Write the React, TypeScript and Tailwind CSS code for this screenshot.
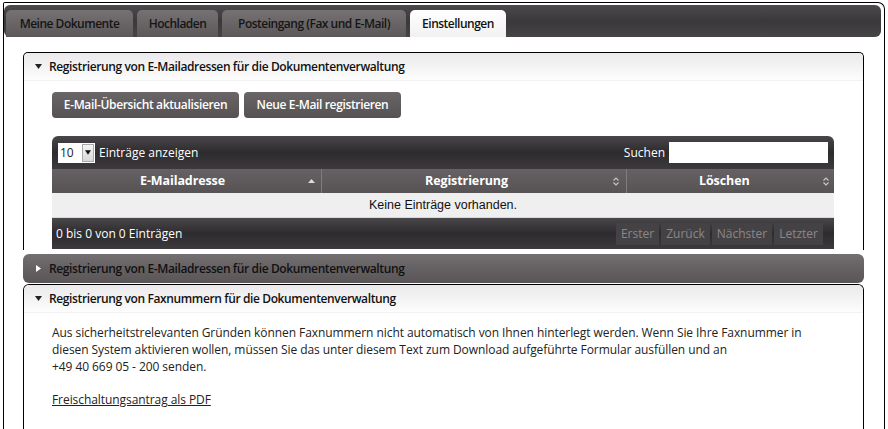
import React from 'react';

// Font stack: Segoe-like look, closest installed widths
const FONT = "font-['Open_Sans',_'Noto_Sans',_sans-serif]";

const TABS = ['Meine Dokumente', 'Hochladen', 'Posteingang (Fax und E-Mail)', 'Einstellungen'];
const TAB_WIDTHS = ['w-[127px]', 'w-[81px]', 'w-[184px]', 'w-[96px]'];

const TriangleDown: React.FC<{ className?: string }> = ({ className }) => (
  <svg width="7" height="5" viewBox="0 0 7 5" className={className}>
    <path d="M0 0h7L3.5 5z" fill="currentColor" />
  </svg>
);

const TriangleRight: React.FC<{ className?: string }> = ({ className }) => (
  <svg width="5" height="7" viewBox="0 0 5 7" className={className}>
    <path d="M0 0v7l5-3.5z" fill="currentColor" />
  </svg>
);

const SortBoth = () => (
  <svg width="6" height="9" viewBox="0 0 6 9" className="text-[#c9c6c8]">
    <path d="M0.5 3.5L3 1l2.5 2.5M0.5 5.5L3 8l2.5-2.5" stroke="currentColor" fill="none" strokeWidth="1.1" />
  </svg>
);

const SortUp = () => (
  <svg width="7" height="4" viewBox="0 0 7 4" className="text-[#dcdadb]">
    <path d="M0 4L3.5 0 7 4z" fill="currentColor" />
  </svg>
);

const PanelHeader: React.FC<{ title: string }> = ({ title }) => (
  <div className="h-[28px] flex items-center pl-[11px] gap-[7px] bg-gradient-to-b from-[#ebe9eb] to-[#fdfdfd] rounded-t-[5px] border-b border-[#f2f2f2]">
    <TriangleDown className="text-[#222]" />
    <span className="text-[12px] font-semibold tracking-[-0.38px] text-[#111]">{title}</span>
  </div>
);

export default function App() {
  return (
    <div className={`w-[888px] h-[429px] overflow-hidden bg-white pt-[2px] pl-[3px] ${FONT}`}>
      <div className="w-[882px] h-[440px] border border-black border-b-0 rounded-tr-[7px] rounded-tl-[2px] pt-[2px]">
        {/* Tab bar */}
        <div className="w-[877px] h-[32px] rounded-[6px] bg-gradient-to-b from-[#4d4a4d] via-[#3b383b] to-[#474447] flex items-end gap-[4px] pl-[2px]">
          {TABS.map((t, i) => {
            const active = i === 3;
            return (
              <div
                key={t}
                className={`${TAB_WIDTHS[i]} h-[27px] rounded-t-[5px] flex items-center justify-center text-[12px] font-semibold tracking-[-0.5px] ${
                  active
                    ? 'bg-gradient-to-b from-[#ffffff] to-[#f1f1f1] text-[#111]'
                    : 'bg-gradient-to-b from-[#767274] to-[#5c585a] text-[#151515]'
                }`}
              >
                {t}
              </div>
            );
          })}
        </div>

        {/* Panel 1: expanded e-mail registration */}
        <div className="ml-[19px] mt-[15px] w-[841px] h-[198px] overflow-hidden border border-black border-b-0 rounded-t-[5px]">
          <PanelHeader title="Registrierung von E-Mailadressen für die Dokumentenverwaltung" />
          <div className="pl-[28px] pt-[11px]">
            <div className="flex gap-[5px]">
              <button className="w-[187px] h-[26px] rounded-[4px] bg-gradient-to-b from-[#6a6668] to-[#565254] text-white text-[12px] font-semibold tracking-[-0.35px]">
                E-Mail-Übersicht aktualisieren
              </button>
              <button className="w-[157px] h-[26px] rounded-[4px] bg-gradient-to-b from-[#6a6668] to-[#565254] text-white text-[12px] font-semibold tracking-[-0.35px]">
                Neue E-Mail registrieren
              </button>
            </div>

            {/* Data table */}
            <div className="mt-[18px] w-[782px] rounded-t-[6px] overflow-hidden">
              <div className="h-[33px] flex items-center justify-between px-[6px] bg-gradient-to-b from-[#4a474a] via-[#2e2b2e] to-[#3d3a3d]">
                <div className="flex items-center gap-[4px]">
                  <div className="flex items-center h-[20px] w-[37px] bg-white">
                    <span className="text-[12px] text-[#222] pl-[2px] w-[24px]">10</span>
                    <div className="w-[12px] h-[18px] bg-gradient-to-b from-[#f4f4f4] to-[#d8d8d8] border border-[#aaa] flex items-center justify-center">
                      <TriangleDown className="text-[#111] w-[6px]" />
                    </div>
                  </div>
                  <span className="text-[12px] text-white">Einträge anzeigen</span>
                </div>
                <div className="flex items-center gap-[4px]">
                  <span className="text-[12px] text-white">Suchen</span>
                  <div className="w-[159px] h-[21px] bg-white" />
                </div>
              </div>
              <div className="h-[24px] flex bg-gradient-to-b from-[#666264] to-[#575355] text-white text-[12.5px] font-bold tracking-[-0.1px]">
                <div className="w-[270px] flex items-center pl-[88px] pr-[6px] justify-between border-r border-[#807c7e]">
                  <span>E-Mailadresse</span>
                  <SortUp />
                </div>
                <div className="w-[305px] flex items-center pl-[103px] pr-[7px] justify-between border-r border-[#807c7e]">
                  <span>Registrierung</span>
                  <SortBoth />
                </div>
                <div className="flex-1 flex items-center pl-[72px] pr-[5px] justify-between">
                  <span>Löschen</span>
                  <SortBoth />
                </div>
              </div>
              <div className="h-[25px] flex items-center justify-center bg-[#efefef] border-b border-[#d8d8d8] text-[12.5px] text-[#111] font-['Liberation_Sans',_Arial,_sans-serif]">
                Keine Einträge vorhanden.
              </div>
              <div className="h-[31px] flex items-center justify-between pl-[4px] pr-[11px] bg-gradient-to-b from-[#4a474a] via-[#2e2b2e] to-[#3d3a3d]">
                <span className="text-[12px] text-white">0 bis 0 von 0 Einträgen</span>
                <div className="flex gap-[2px] text-[12px] text-[#8a8789]">
                  <span className="px-[5px] h-[22px] flex items-center bg-[#454245]">Erster</span>
                  <span className="px-[5px] h-[22px] flex items-center bg-[#454245]">Zurück</span>
                  <span className="px-[5px] h-[22px] flex items-center bg-[#454245]">Nächster</span>
                  <span className="px-[5px] h-[22px] flex items-center bg-[#454245]">Letzter</span>
                </div>
              </div>
            </div>
          </div>
        </div>

        {/* Panel 2: collapsed header */}
        <div className="ml-[19px] mt-[4px] w-[841px] h-[29px] rounded-[6px] bg-gradient-to-b from-[#747072] via-[#656163] to-[#5a5658] flex items-center pl-[13px] gap-[8px]">
          <TriangleRight className="text-white" />
          <span className="text-[12px] font-semibold tracking-[-0.38px] text-[#111]">
            Registrierung von E-Mailadressen für die Dokumentenverwaltung
          </span>
        </div>

        {/* Panel 3: fax numbers */}
        <div className="ml-[19px] mt-[1px] w-[841px] h-[200px] border border-black border-b-0 rounded-t-[6px]">
          <PanelHeader title="Registrierung von Faxnummern für die Dokumentenverwaltung" />
          <div className="pl-[28px] pt-[11px] text-[12px] leading-[17px] tracking-[-0.07px] text-[#222]">
            <p>
              Aus sicherheitstrelevanten Gründen können Faxnummern nicht automatisch von Ihnen hinterlegt werden. Wenn Sie Ihre Faxnummer in
              <br />
              diesen System aktivieren wollen, müssen Sie das unter diesem Text zum Download aufgeführte Formular ausfüllen und an
              <br />
              +49 40 669 05 - 200 senden.
            </p>
            <a href="#" className="block mt-[16px] underline text-[#222]">
              Freischaltungsantrag als PDF
            </a>
          </div>
        </div>
      </div>
    </div>
  );
}
